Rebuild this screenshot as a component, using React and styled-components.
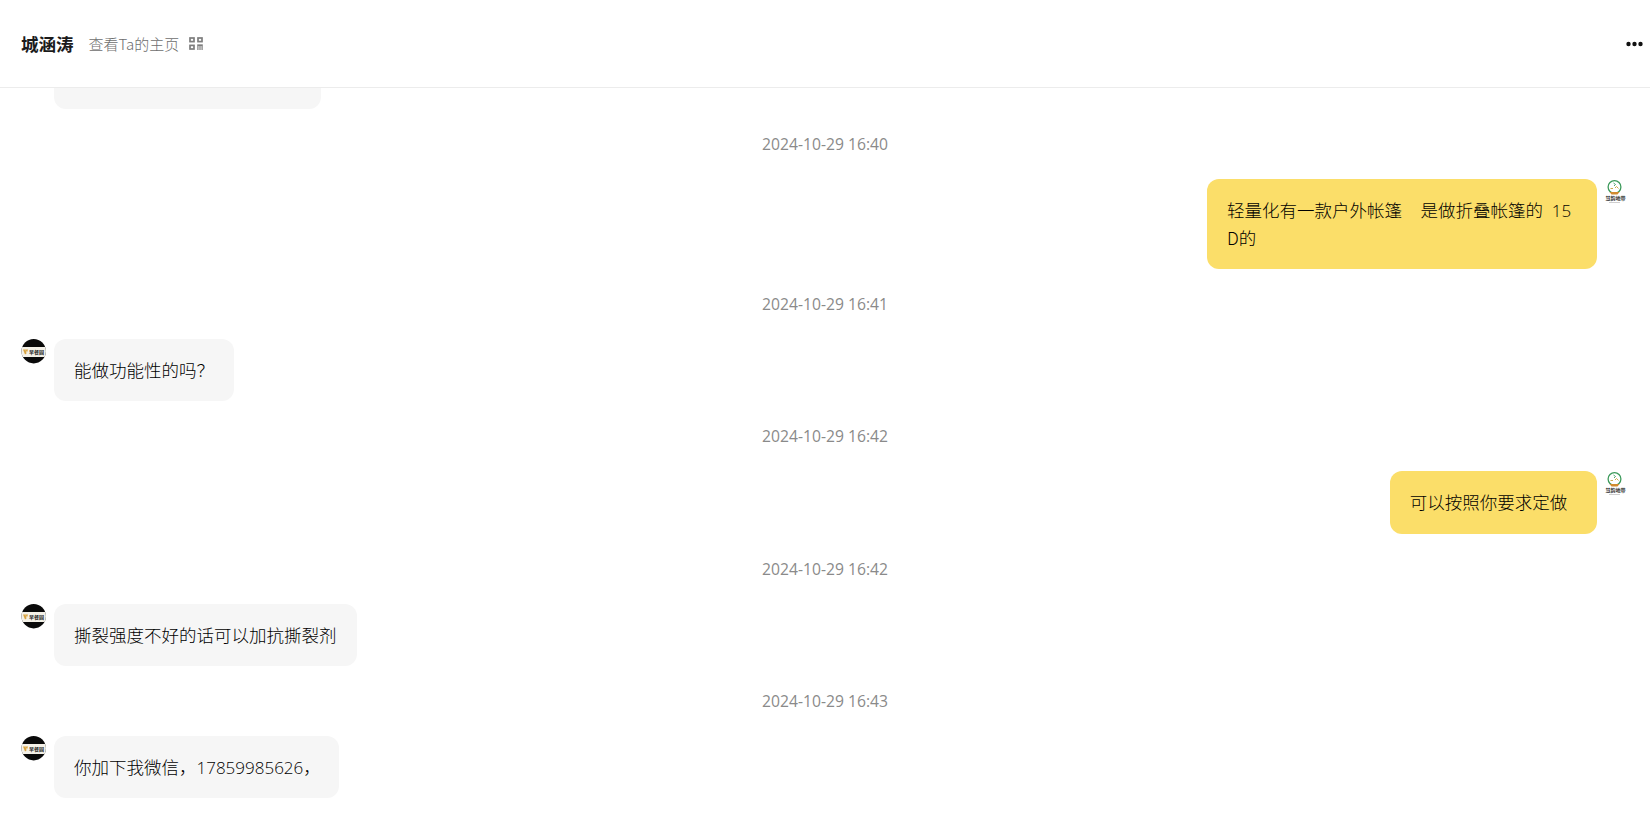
import React from "react";
import styled, { createGlobalStyle } from "styled-components";

const CJK = `"Noto Sans CJK SC", "Open Sans", sans-serif`;

const Global = createGlobalStyle`
  html, body { margin: 0; padding: 0; background: #fff; overflow: hidden; height: 820px; }
  * { box-sizing: border-box; }
`;

const Page = styled.div`
  width: 1650px;
  height: 820px;
  overflow: hidden;
  font-family: ${CJK};
  display: flex;
  flex-direction: column;
`;
const Header = styled.header`
  flex: none;
  height: 88px;
  border-bottom: 1px solid #ececec;
  padding: 0 7px 0 21px;
  display: flex;
  align-items: center;
`;
const Name = styled.span`
  font-size: 17.5px;
  font-weight: 700;
  color: #1a1a1a;
`;
const ProfileLink = styled.span`
  margin-left: 15px;
  font-size: 15px;
  font-weight: 300;
  color: #6e6e6e;
`;
const QrWrap = styled.span`
  margin-left: 10px;
  display: flex;
`;
const MoreWrap = styled.span`
  margin-left: auto;
  display: flex;
`;
const Thread = styled.main`
  flex: 1;
  display: flex;
  flex-direction: column;
`;
const ClippedBubble = styled.div`
  margin-left: 54px;
  width: 267px;
  height: 21px;
  background: #f6f6f6;
  border-radius: 0 0 12px 12px;
`;
const Time = styled.div`
  height: 70px;
  display: flex;
  align-items: center;
  justify-content: center;
  font-family: "Open Sans", sans-serif;
  font-size: 15.7px;
  color: #8a8a8a;
`;
const Row = styled.div`
  display: flex;
  align-items: flex-start;
  gap: 8px;
  padding: 0 20px 0 21px;
  justify-content: ${(p) => (p.$mine ? "flex-end" : "flex-start")};
`;
const Bubble = styled.div`
  padding: 17px ${(p) => p.$paddingRight ?? 20}px 17px 20px;
  border-radius: 12px;
  font-size: 17.5px;
  line-height: 28.15px;
  font-weight: 300;
  color: #000;
  white-space: pre-wrap;
  background: ${(p) => (p.$mine ? "#fbde69" : "#f6f6f6")};
  ${(p) => p.$width && `width: ${p.$width}px;`}
`;
const Digits = styled.span`
  font-family: "Open Sans", sans-serif;
  font-size: 17px;
  line-height: 1;
`;
const AvatarSlot = styled.span`
  flex: none;
  width: 25px;
  height: 25px;
  display: flex;
`;

const QrIcon = () => (
  <svg width="14" height="13" viewBox="0 0 14 13" fill="none" stroke="#7d7d7d" strokeWidth="1.7">
    <rect x="1" y="1" width="4" height="3.6" />
    <rect x="9" y="1" width="4" height="3.6" />
    <rect x="1" y="8.4" width="4" height="3.6" />
    <path d="M8.2 8.2h5.6" />
    <path d="M8.9 9v4M11 9v4M13.1 9v4" strokeWidth="1.2" />
  </svg>
);
const MoreIcon = () => (
  <svg width="17" height="6" viewBox="0 0 17 6" fill="#111">
    <circle cx="2.5" cy="3" r="2.2" />
    <circle cx="8.5" cy="3" r="2.2" />
    <circle cx="14.5" cy="3" r="2.2" />
  </svg>
);
const TheirAvatar = () => (
  <AvatarSlot>
    <svg width="25" height="25" viewBox="0 0 25 25">
      <defs>
        <clipPath id="their">
          <circle cx="12.7" cy="12.2" r="12.2" />
        </clipPath>
      </defs>
      <g clipPath="url(#their)">
        <rect width="25" height="25" fill="#0a0a0a" />
        <rect y="8" width="25" height="10" fill="#f4f1e8" />
      </g>
      <path d="M2 10.5l2 5 1.5-1-1-4zM4.5 10.5l1.5 3 1-3z" fill="#d9a441" />
      <text x="8" y="15" fontSize="5" fontWeight="700" fill="#222" fontFamily={`"Noto Sans CJK SC"`}>早餐园</text>
    </svg>
  </AvatarSlot>
);
const MyAvatar = () => (
  <AvatarSlot>
    <svg width="25" height="26" viewBox="0 0 25 26">
      <circle cx="9.5" cy="8" r="6.4" fill="#fff" stroke="#3d9a5b" strokeWidth="1.3" />
      <path d="M8.5 4l2 1.5-1.5 1.5" fill="none" stroke="#3d9a5b" strokeWidth="0.9" />
      <path d="M5.5 9.5h2.5M10 9l1.5-1.5L13.5 9.5" fill="none" stroke="#c5a23a" strokeWidth="0.9" />
      <path d="M4.5 13h10l-2 2.5h-6z" fill="#d18b2e" />
      <text x="0.5" y="21" fontSize="5" fontWeight="700" fill="#333" fontFamily={`"Noto Sans CJK SC"`}>慧韵地带</text>
      <rect x="4" y="23" width="11" height="0.7" fill="#bbb" />
    </svg>
  </AvatarSlot>
);

export default function App() {
  return (
    <Page>
      <Global />
      <Header>
        <Name>城涵涛</Name>
        <ProfileLink>查看Ta的主页</ProfileLink>
        <QrWrap><QrIcon /></QrWrap>
        <MoreWrap><MoreIcon /></MoreWrap>
      </Header>
      <Thread>
        <ClippedBubble />
        <Time>2024-10-29 16:40</Time>
        <Row $mine>
          <Bubble $mine $width={390}>
            {"轻量化有一款户外帐篷\u3000\u200a是做折叠帐篷的\u2002"}<Digits>15</Digits>{"\nD的"}
          </Bubble>
          <MyAvatar />
        </Row>
        <Time>2024-10-29 16:41</Time>
        <Row>
          <TheirAvatar />
          <Bubble>能做功能性的吗？</Bubble>
        </Row>
        <Time>2024-10-29 16:42</Time>
        <Row $mine>
          <Bubble $mine>{"可以按照你要求定做\u2002\u200a"}</Bubble>
          <MyAvatar />
        </Row>
        <Time>2024-10-29 16:42</Time>
        <Row>
          <TheirAvatar />
          <Bubble>撕裂强度不好的话可以加抗撕裂剂</Bubble>
        </Row>
        <Time>2024-10-29 16:43</Time>
        <Row>
          <TheirAvatar />
          <Bubble $paddingRight={18}>你加下我微信，<Digits>17859985626</Digits>，</Bubble>
        </Row>
      </Thread>
    </Page>
  );
}
